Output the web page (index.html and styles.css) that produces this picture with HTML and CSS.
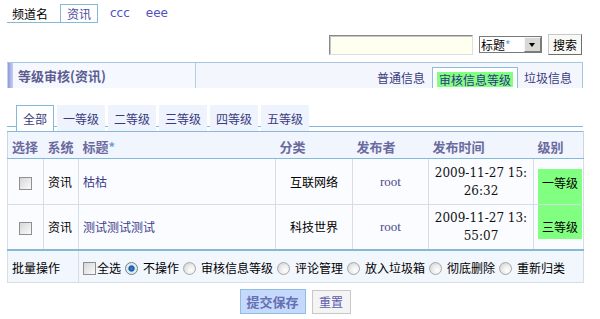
FILE: index.html
```html
<!DOCTYPE html>
<html lang="zh-CN">
<head>
<meta charset="utf-8">
<title>等级审核</title>
<link rel="stylesheet" href="styles.css">
</head>
<body>
<div class="page">
  <div class="chan-bar">
    <span class="chan-label">频道名</span>
    <span class="chan-tab">资讯</span>
    <a class="chan-link first" href="#">ccc</a>
    <a class="chan-link" href="#">eee</a>
  </div>

  <div class="search-row">
    <input class="search-input" type="text">
    <div class="fake-select"><span class="fs-text">标题<span class="star">*</span></span><span class="fs-arrow"></span></div>
    <button class="search-btn" type="button">搜索</button>
  </div>

  <div class="panel-head">
    <div class="panel-title"><span class="accent"></span>等级审核(资讯)</div>
    <div class="panel-tabs">
      <span class="ptab">普通信息</span>
      <span class="ptab active"><span class="hl">审核信息等级</span></span>
      <span class="ptab">垃圾信息</span>
    </div>
  </div>

  <div class="subtabs">
    <span class="stab active">全部</span>
    <span class="stab">一等级</span>
    <span class="stab">二等级</span>
    <span class="stab">三等级</span>
    <span class="stab">四等级</span>
    <span class="stab">五等级</span>
  </div>

  <table class="grid">
    <colgroup>
      <col class="c-sel"><col class="c-sys"><col class="c-title"><col class="c-cat"><col class="c-pub"><col class="c-time"><col class="c-lv">
    </colgroup>
    <thead>
      <tr>
        <th>选择</th><th>系统</th><th>标题<span class="star">*</span></th><th>分类</th><th>发布者</th><th>发布时间</th><th>级别</th>
      </tr>
    </thead>
    <tbody>
      <tr class="row">
        <td class="center"><input type="checkbox" class="cb"></td>
        <td>资讯</td>
        <td><a class="title-link" href="#">枯枯</a></td>
        <td class="center">互联网络</td>
        <td class="center pub">root</td>
        <td class="center time">2009-11-27 15:<br>26:32</td>
        <td class="lv"><div class="lv-box lv-first">一等级</div></td>
      </tr>
      <tr class="row">
        <td class="center"><input type="checkbox" class="cb"></td>
        <td>资讯</td>
        <td><a class="title-link" href="#">测试测试测试</a></td>
        <td class="center">科技世界</td>
        <td class="center pub">root</td>
        <td class="center time">2009-11-27 13:<br>55:07</td>
        <td class="lv"><div class="lv-box lv-second">三等级</div></td>
      </tr>
      <tr class="batch">
        <td colspan="2" class="batch-label">批量操作</td>
        <td colspan="5" class="ops">
          <div class="ops-line">
            <label class="opt"><input type="checkbox" class="cb">全选</label>
            <label class="opt"><input type="radio" class="rd" name="op" checked>不操作</label>
            <label class="opt"><input type="radio" class="rd" name="op">审核信息等级</label>
            <label class="opt"><input type="radio" class="rd" name="op">评论管理</label>
            <label class="opt"><input type="radio" class="rd" name="op">放入垃圾箱</label>
            <label class="opt"><input type="radio" class="rd" name="op">彻底删除</label>
            <label class="opt"><input type="radio" class="rd" name="op">重新归类</label>
          </div>
        </td>
      </tr>
    </tbody>
  </table>

  <div class="actions">
    <button class="btn-save" type="button">提交保存</button>
    <button class="btn-reset" type="button">重置</button>
  </div>
</div>
</body>
</html>
```
FILE: styles.css
```css
* { box-sizing: border-box; }

body {
  margin: 0;
  background: #fff;
  color: #000;
  font-family: "Noto Sans CJK SC", "Liberation Sans", sans-serif;
  font-size: 12px;
  line-height: 16px;
}

.page {
  width: 583px;
  padding-left: 7px;
}

/* channel tabs */
.chan-bar {
  display: flex;
  align-items: flex-end;
  height: 23px;
  padding-top: 4px;
}
.chan-label {
  width: 53px;
  height: 19px;
  padding: 1px 0 0 5px;
  line-height: 17px;
  border-bottom: 1px solid #86b9d8;
}
.chan-tab {
  height: 19px;
  padding: 0 6px;
  line-height: 17px;
  border: 1px solid #86b9d8;
  color: #4a4a9a;
}
.chan-link {
  padding: 0 8px 1px;
  line-height: 17px;
  font-family: "DejaVu Sans", sans-serif;
  font-size: 12px;
  color: #5050c0;
  text-decoration: none;
}
.chan-link.first { margin-left: 4px; }

/* search */
.search-row {
  display: flex;
  justify-content: flex-end;
  align-items: center;
  gap: 6px;
  height: 21px;
  margin-top: 11px;
  padding-right: 1px;
}
.search-input {
  width: 144px;
  height: 20px;
  margin: 0;
  border: 1px solid;
  border-color: #8a8a8a #dedede #dedede #8a8a8a;
  box-shadow: inset 1px 1px 0 #c4c4c4;
  background: #ffffef;
}
.fake-select {
  display: flex;
  align-items: center;
  width: 63px;
  height: 17px;
  padding-left: 1px;
  border: 1px solid #7a7a7a;
  background: #fff;
  line-height: 15px;
}
.fs-text { white-space: nowrap; }
.star { color: #6f9ad8; }
.fs-arrow {
  position: relative;
  margin-left: auto;
  width: 17px;
  height: 15px;
  background: #d8d8d4;
  border: 1px solid;
  border-color: #f6f6f6 #7c7c7c #7c7c7c #f6f6f6;
}
.fs-arrow::after {
  content: "";
  position: absolute;
  left: 4px;
  top: 5px;
  border-left: 3.5px solid transparent;
  border-right: 3.5px solid transparent;
  border-top: 4px solid #000;
}
.search-btn {
  width: 34px;
  height: 21px;
  margin: 0;
  padding: 0;
  border: 1px solid;
  border-color: #c8c8c8 #6e6e6e #6e6e6e #c8c8c8;
  background: #f9f9f5;
  font-family: "Noto Sans CJK SC", sans-serif;
  font-size: 12px;
  color: #000;
  line-height: 16px;
}

/* panel header */
.panel-head {
  display: flex;
  height: 26px;
  margin-top: 7px;
  background: #f3f6fd;
  border-top: 1px solid #a6c6df;
  border-right: 1px solid #a6c6df;
}
.panel-title {
  display: flex;
  align-items: center;
  width: 189px;
  background: #f5f8fe;
  border-left: 1px solid #c4d6e6;
  border-right: 1px solid #b6cfe2;
  font-size: 13px;
  font-weight: bold;
  color: #5c5c90;
}
.accent {
  align-self: stretch;
  width: 5px;
  margin-right: 5px;
  background: linear-gradient(to right, #9098dc, #c8d0f2);
}
.panel-tabs {
  flex: 1;
  display: flex;
  justify-content: flex-end;
  align-items: flex-end;
  padding-right: 10px;
}
.ptab {
  padding-bottom: 2px;
  line-height: 16px;
  color: #3a3a80;
}
.ptab.active {
  height: 21px;
  margin: 0 6px 0 7px;
  padding: 4px 4px 1px;
  background: #fff;
  border: 1px solid #8fbcd9;
  border-bottom: none;
}
.hl {
  display: block;
  padding: 0 2px;
  line-height: 15px;
  background: #80ff80;
  color: #33338a;
}

/* sub tabs */
.subtabs {
  display: flex;
  gap: 3px;
  height: 26px;
  margin-top: 17px;
  padding-left: 9px;
  background: linear-gradient(to bottom, transparent 21px, #86b9d8 21px, #86b9d8 22px, transparent 22px);
}
.stab {
  width: 48px;
  height: 26px;
  padding-top: 5px;
  line-height: 18px;
  text-align: center;
  background: #eef3fd;
  color: #3a3a80;
}
.stab.active {
  width: 38px;
  padding-top: 4px;
  background: #fff;
  border: 1px solid #86b9d8;
  border-bottom: none;
}

/* grid */
.grid {
  width: 576px;
  border-collapse: collapse;
  table-layout: fixed;
}
.c-sel { width: 36px; }
.c-sys { width: 35px; }
.c-title { width: 197px; }
.c-cat { width: 77px; }
.c-pub { width: 76px; }
.c-time { width: 105px; }
.c-lv { width: 50px; }

.grid th {
  height: 27px;
  padding: 3px 4px 0;
  text-align: left;
  font-size: 13px;
  font-weight: bold;
  color: #6a6a9e;
  background: #f1f5fd;
  border-top: 1px solid #86b9d8;
  border-bottom: 1px solid #86b9d8;
  white-space: nowrap;
}
.grid th:first-child { border-left: 1px solid #c6d8e8; }
.grid th:last-child { border-right: 1px solid #c6d8e8; }

.row td {
  height: 45px;
  padding: 0 4px;
  background: #fbfcff;
  border: 1px solid #d5dde7;
  vertical-align: middle;
}
.center { text-align: center; }
.cb {
  appearance: none;
  -webkit-appearance: none;
  display: inline-block;
  width: 13px;
  height: 13px;
  margin: 0;
  vertical-align: middle;
  border: 1px solid #8f8f8f;
  background: linear-gradient(135deg, #d6d6d6, #fbfbfb);
}
.title-link {
  color: #3c3c8c;
  text-decoration: none;
}
.pub {
  font-family: "Liberation Serif", serif;
  font-size: 13px;
  color: #4b4b8b;
}
.time {
  font-family: "DejaVu Serif", serif;
  font-size: 12px;
  line-height: 18px;
  color: #111;
}
.row td.lv {
  padding: 0 1px 0 4px;
  vertical-align: top;
}
.lv-box {
  text-align: center;
  line-height: 16px;
  background: #80ff80;
  color: #000;
}
.lv-first {
  height: 35px;
  margin-top: 10px;
  padding-top: 6px;
}
.lv-second {
  height: 34px;
  padding-top: 14px;
}

.batch td {
  height: 33px;
  padding: 4px 4px 0;
  background: #f2f6fd;
  border: 1px solid #d5dde7;
  border-top: 2px solid #86b9d8;
  vertical-align: middle;
}
.ops-line {
  display: flex;
  align-items: center;
  white-space: nowrap;
}
.opt {
  display: flex;
  align-items: center;
}
.opt .cb { margin-right: 1px; }
.rd {
  appearance: none;
  -webkit-appearance: none;
  width: 13px;
  height: 13px;
  margin: 0 5px 0 4px;
  border-radius: 50%;
  border: 1px solid #a9a9a9;
  background: radial-gradient(circle at 65% 65%, #ffffff 0, #ececec 45%, #c9c9c9 100%);
}
.rd:checked {
  border-color: #6f8192;
  background: radial-gradient(circle, #3d8fd6 0, #12549a 2.6px, #dbe6f0 3.6px, #f4f4f4 100%);
}

/* actions */
.actions {
  display: flex;
  justify-content: center;
  align-items: flex-start;
  gap: 6px;
  margin-top: 6px;
}
.btn-save {
  width: 66px;
  height: 25px;
  margin: 0;
  padding: 0;
  border: 1px solid #93bde0;
  background: #c5d9fc;
  font-family: "Noto Sans CJK SC", sans-serif;
  font-size: 13px;
  font-weight: bold;
  color: #6670b4;
  line-height: 16px;
}
.btn-reset {
  width: 39px;
  height: 24px;
  margin: 1px 0 0;
  padding: 0;
  border: 1px solid #c8c8c8;
  background: #f4f4f4;
  font-family: "Noto Sans CJK SC", sans-serif;
  font-size: 12px;
  color: #5d5db0;
  line-height: 16px;
}
```
